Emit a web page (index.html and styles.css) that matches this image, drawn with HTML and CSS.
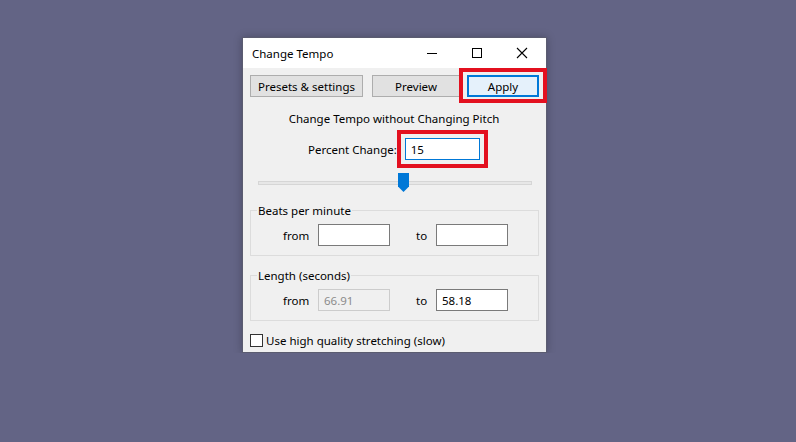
FILE: index.html
```html
<!DOCTYPE html>
<html lang="en">
<head>
    <meta charset="UTF-8">
    <meta name="viewport" content="width=device-width, initial-scale=1.0">
    <title>Change Tempo</title>
    <link rel="stylesheet" href="styles.css">
</head>
<body>
    <div class="window">
        <div class="titlebar">
            <span class="title">Change Tempo</span>
            <div class="win-controls">
                <span class="win-btn">
                    <svg width="12" height="12" viewBox="0 0 12 12"><path d="M1 6.5h10" stroke="#000" stroke-width="1"/></svg>
                </span>
                <span class="win-btn">
                    <svg width="12" height="12" viewBox="0 0 12 12"><rect x="1.5" y="1.5" width="9" height="9" fill="none" stroke="#000" stroke-width="1"/></svg>
                </span>
                <span class="win-btn">
                    <svg width="12" height="12" viewBox="0 0 12 12"><path d="M1 1l10 10M11 1L1 11" stroke="#000" stroke-width="1.1"/></svg>
                </span>
            </div>
        </div>

        <div class="content">
            <div class="toolbar">
                <button class="btn btn-presets">Presets &amp; settings</button>
                <button class="btn btn-preview">Preview</button>
                <div class="highlight-wrap">
                    <button class="btn btn-apply">Apply</button>
                    <div class="highlight hl-apply"></div>
                </div>
            </div>

            <div class="heading">Change Tempo without Changing Pitch</div>

            <div class="percent-row">
                <label class="lbl">Percent Change:</label>
                <div class="highlight-wrap">
                    <input class="field field-percent" type="text" value="15">
                    <div class="highlight hl-percent"></div>
                </div>
            </div>

            <div class="slider">
                <div class="track"></div>
                <div class="thumb">
                    <svg width="11" height="19" viewBox="0 0 11 19"><path d="M0 0h11v13.5L5.5 19 0 13.5z" fill="#0078d7"/></svg>
                </div>
            </div>

            <fieldset class="group">
                <legend>Beats per minute</legend>
                <div class="pair">
                    <span class="lbl from">from</span>
                    <input class="field" type="text" value="">
                    <span class="lbl to">to</span>
                    <input class="field" type="text" value="">
                </div>
            </fieldset>

            <fieldset class="group">
                <legend>Length (seconds)</legend>
                <div class="pair">
                    <span class="lbl from">from</span>
                    <input class="field disabled" type="text" value="66.91" disabled>
                    <span class="lbl to">to</span>
                    <input class="field" type="text" value="58.18">
                </div>
            </fieldset>

            <label class="check">
                <span class="box"></span>
                <span>Use high quality stretching (slow)</span>
            </label>
        </div>
    </div>
</body>
</html>
```

FILE: styles.css
```css
body {
    margin: 0;
    background-color: #636485;
    font-family: "Noto Sans", "Open Sans", sans-serif;
    font-size: 11.5px;
    color: #000;
}

.window {
    width: 303px;
    height: 314px;
    margin: 37px 0 0 242px;
    background-color: #f0f0f0;
    border: 1px solid #5b5c70;
    box-shadow: 0 0 8px rgba(0, 0, 0, 0.25);
    display: flex;
    flex-direction: column;
}

.titlebar {
    height: 30px;
    background-color: #fff;
    display: flex;
    align-items: center;
    justify-content: space-between;
    padding-left: 9px;
}

.win-controls {
    display: flex;
    padding-right: 2px;
}

.win-btn {
    width: 45px;
    height: 30px;
    display: flex;
    align-items: center;
    justify-content: center;
}

.content {
    padding: 7px 7px 0 6px;
    flex: 1;
    display: flex;
    flex-direction: column;
}

.toolbar {
    display: flex;
    align-items: center;
    padding-left: 1px;
}

.btn {
    font-family: inherit;
    font-size: 11.5px;
    height: 22px;
    background-color: #e1e1e1;
    border: 1px solid #adadad;
    padding: 0;
    color: #000;
}

.btn-presets {
    width: 113px;
}

.btn-preview {
    width: 88px;
    margin-left: 9px;
}

.btn-apply {
    width: 72px;
    margin-left: 7px;
    background-color: #e5f1fb;
    border: 2px solid #0078d7;
    display: block;
}

.highlight-wrap {
    position: relative;
}

.highlight {
    position: absolute;
    border: 4px solid #e3101f;
    pointer-events: none;
}

.hl-apply {
    left: -1px;
    top: -7px;
    width: 80px;
    height: 27px;
}

.hl-percent {
    left: -8px;
    top: -8px;
    width: 83px;
    height: 30px;
}

.heading {
    text-align: center;
    margin-top: 14px;
    height: 17px;
}

.percent-row {
    display: flex;
    align-items: center;
    margin-top: 10px;
    padding-left: 59px;
}

.percent-row .lbl {
    margin-right: 8px;
}

.field {
    font-family: inherit;
    font-size: 11.5px;
    width: 72px;
    height: 22px;
    box-sizing: border-box;
    border: 1px solid #7a7a7a;
    background-color: #fff;
    padding: 0 5px;
    margin: 0;
    color: #000;
}

.field-percent {
    width: 75px;
    border-color: #0078d7;
}

.field.disabled {
    background-color: #f0f0f0;
    border-color: #cccccc;
    color: #8c8c8c;
}

.slider {
    position: relative;
    height: 20px;
    margin: 13px 7px 0 9px;
}

.track {
    margin-top: 8px;
    height: 2px;
    background-color: #e7e7e7;
    border: 1px solid #d6d6d6;
}

.thumb {
    position: absolute;
    left: 140px;
    top: 0;
    line-height: 0;
}

.group {
    margin: 10px 0 0 1px;
    padding: 6px 0 9px;
    border: 1px solid #dcdcdc;
    min-width: 0;
}

.group + .group {
    margin-top: 12px;
}

.group legend {
    padding: 0 1px;
    margin-left: 6px;
}

.pair {
    display: flex;
    align-items: center;
}

.pair .from {
    margin-left: 32px;
    width: 35px;
}

.pair .to {
    margin-left: 26px;
    width: 20px;
}

.check {
    display: flex;
    align-items: center;
    margin-top: 12px;
    margin-left: 1px;
}

.check .box {
    width: 11px;
    height: 11px;
    border: 1px solid #333;
    background-color: #fff;
    margin-right: 3px;
}
```
